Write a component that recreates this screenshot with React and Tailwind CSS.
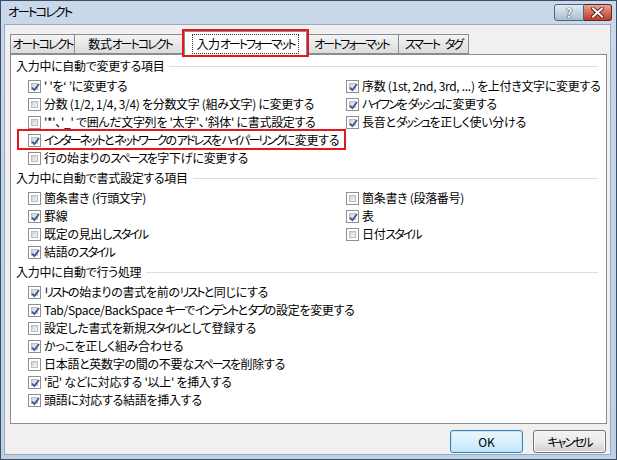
import React from "react";

// Narrow katakana runs to approximate the UI font's tight kana.
function K({ children }) {
  const parts = String(children).split(/([\u30A0-\u30FF]+)/);
  return (
    <>
      {parts.map((p, i) =>
        /^[\u30A0-\u30FF]+$/.test(p) ? (
          <span key={i} className="tracking-[-2px]">
            {p}
          </span>
        ) : (
          <span key={i} className="tracking-[-0.3px]">
            {p}
          </span>
        )
      )}
    </>
  );
}

function Box({ checked }) {
  return (
    <span className="w-[13px] h-[13px] border border-[#8e8f8f] bg-white p-[2px] shrink-0 flex">
      <span className="flex-1 relative bg-gradient-to-br from-[#cdd1d6] to-[#f7f7f7] border border-[#babec4]">
        {checked && (
          <svg className="absolute -left-[2px] -top-[2px]" width="11" height="11" viewBox="0 0 11 11">
            <path d="M2 5.5 L4.3 8 L9 2" fill="none" stroke="#3c5597" strokeWidth="1.8" />
          </svg>
        )}
      </span>
    </span>
  );
}

function Item({ checked, label, mark }) {
  return (
    <div className="h-[18px] flex items-center gap-[3px] relative whitespace-nowrap">
      {/* annotation box */}
      {mark && (
        <div className="absolute -left-[11px] -top-[2px] w-[329px] h-[21px] border-2 border-[#e8161c]" />
      )}
      <Box checked={checked} />
      <span>
        <K>{label}</K>
      </span>
    </div>
  );
}

function Section({ title, left, right }) {
  return (
    <div className="flex flex-col">
      <div className="h-[16px] flex items-center gap-[5px] pr-[8px]">
        <span className="whitespace-nowrap">
          <K>{title}</K>
        </span>
        <div className="flex-1 h-px bg-[#d5dfe5]" />
      </div>
      <div className="mt-[3px] pl-[12px] grid grid-cols-[318px_1fr]">
        <div className="flex flex-col">
          {left.map((it) => (
            <Item key={it.label} {...it} />
          ))}
        </div>
        <div className="flex flex-col">
          {(right || []).map((it) => (
            <Item key={it.label} {...it} />
          ))}
        </div>
      </div>
    </div>
  );
}

const tabs = [
  { label: "オートコレクト", w: "w-[65px]" },
  { label: "数式オートコレクト", w: "w-[112px]" },
  { label: "入力オートフォーマット", w: "w-[123px]", active: true },
  { label: "オートフォーマット", w: "w-[95px]" },
  { label: "スマート\u2002タグ", w: "w-[71px]" },
];

export default function App() {
  return (
    <div className="w-[617px] h-[460px] border border-[#3b4c63] bg-gradient-to-b from-[#c9d8ea] to-[#bfd0e5] flex flex-col text-[12px] text-black font-['Noto_Sans_CJK_JP',sans-serif] [font-feature-settings:'palt'] leading-none">
      {/* Title bar */}
      <div className="h-[23px] flex items-center justify-between pl-[7px] pr-[4px]">
        <span className="text-[12.5px] whitespace-nowrap">
          <K>オートコレクト</K>
        </span>
        <div className="flex items-start self-start mt-[3px]">
          <div className="w-[30px] h-[17px] rounded-l-[3px] border border-[#4e6480] bg-gradient-to-b from-[#e3ebf4] via-[#c6d4e4] to-[#a9bcd4] flex items-center justify-center font-bold text-[13px] text-[#f4f7fb] [text-shadow:0_0_1px_#223,0_0_1px_#223]">
            ?
          </div>
          <div className="w-[28px] h-[17px] rounded-r-[3px] border border-l-0 border-[#5b2a25] bg-gradient-to-b from-[#e5a798] via-[#d46a57] to-[#c0392b] flex items-center justify-center">
            <svg width="13" height="11" viewBox="0 0 13 11">
              <path d="M2 1.5 L11 9.5 M11 1.5 L2 9.5" stroke="#3a1410" strokeWidth="3.6" strokeLinecap="square" />
              <path d="M2 1.5 L11 9.5 M11 1.5 L2 9.5" stroke="#ffffff" strokeWidth="2" strokeLinecap="square" />
            </svg>
          </div>
        </div>
      </div>

      {/* Client area */}
      <div className="flex-1 ml-[3px] mr-[5px] mb-[4px] bg-[#f0f0f0] border border-[#98aac0] flex flex-col pt-[6px] pl-[5px] pr-[3px]">
        {/* Tabs */}
        <div className="flex items-end h-[23px] relative z-10 whitespace-nowrap">
          {tabs.map((t) =>
            t.active ? (
              <div
                key={t.label}
                className={`${t.w} -mx-[2px] h-[24px] -mb-px bg-white border border-b-0 border-[#898c95] flex items-center justify-center relative`}
              >
                <span className="border border-dotted border-[#333] px-[3px] py-[3px]">
                  <K>{t.label}</K>
                </span>
                <div className="absolute -left-[3px] -top-[3px] -right-[3px] -bottom-[2px] border-2 border-[#e8161c]" />
              </div>
            ) : (
              <div
                key={t.label}
                className={`${t.w} h-[20px] bg-gradient-to-b from-[#f4f4f4] to-[#dcdcdc] border border-[#898c95] -ml-px first:ml-0 flex items-center justify-center`}
              >
                <K>{t.label}</K>
              </div>
            )
          )}
        </div>

        {/* Panel */}
        <div className="h-[370px] bg-white border border-[#898c95] pt-[3px] pl-[5px] flex flex-col gap-[3px]">
          <Section
            title="入力中に自動で変更する項目"
            left={[
              { checked: true, label: "' 'を‘ ’に変更する" },
              { checked: false, label: "分数 (1/2, 1/4, 3/4) を分数文字 (組み文字) に変更する" },
              { checked: false, label: "'*'、'_' で囲んだ文字列を '太字'、'斜体' に書式設定する" },
              { checked: true, label: "インターネットとネットワークのアドレスをハイパーリンクに変更する", mark: true },
              { checked: false, label: "行の始まりのスペースを字下げに変更する" },
            ]}
            right={[
              { checked: true, label: "序数 (1st, 2nd, 3rd, ...) を上付き文字に変更する" },
              { checked: true, label: "ハイフンをダッシュに変更する" },
              { checked: true, label: "長音とダッシュを正しく使い分ける" },
            ]}
          />
          <Section
            title="入力中に自動で書式設定する項目"
            left={[
              { checked: false, label: "箇条書き (行頭文字)" },
              { checked: true, label: "罫線" },
              { checked: false, label: "既定の見出しスタイル" },
              { checked: true, label: "結語のスタイル" },
            ]}
            right={[
              { checked: false, label: "箇条書き (段落番号)" },
              { checked: true, label: "表" },
              { checked: false, label: "日付スタイル" },
            ]}
          />
          <Section
            title="入力中に自動で行う処理"
            left={[
              { checked: true, label: "リストの始まりの書式を前のリストと同じにする" },
              { checked: true, label: "Tab/Space/BackSpace キーでインデントとタブの設定を変更する" },
              { checked: false, label: "設定した書式を新規スタイルとして登録する" },
              { checked: true, label: "かっこを正しく組み合わせる" },
              { checked: false, label: "日本語と英数字の間の不要なスペースを削除する" },
              { checked: true, label: "'記' などに対応する '以上' を挿入する" },
              { checked: true, label: "頭語に対応する結語を挿入する" },
            ]}
          />
        </div>

        {/* Buttons */}
        <div className="flex justify-end gap-[10px] mt-[6px] pr-[1px]">
          <button className="w-[73px] h-[23px] rounded-[3px] border border-[#3c7fb1] bg-gradient-to-b from-[#eaf6fd] via-[#d9f0fc] to-[#bee6fd] shadow-[inset_0_0_0_1px_#c4e5f6]">
            OK
          </button>
          <button className="w-[73px] h-[23px] rounded-[3px] border border-[#707070] bg-gradient-to-b from-[#f2f2f2] via-[#ebebeb] to-[#cfcfcf] shadow-[inset_0_0_0_1px_#fcfcfc]">
            <K>キャンセル</K>
          </button>
        </div>
      </div>
    </div>
  );
}
